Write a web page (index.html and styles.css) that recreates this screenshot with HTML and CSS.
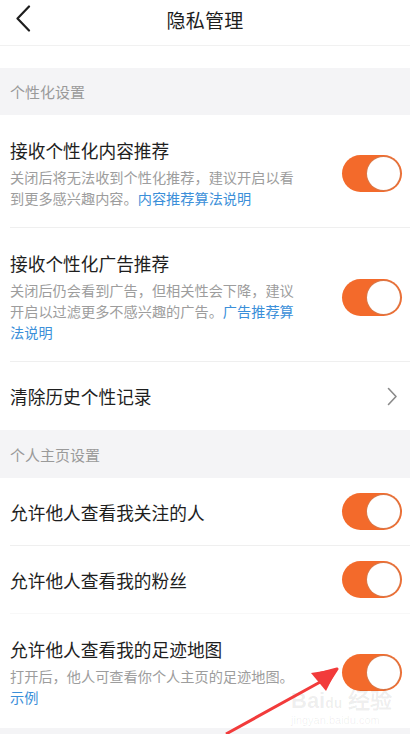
FILE: index.html
```html
<!DOCTYPE html>
<html lang="zh-CN">
<head>
    <meta charset="UTF-8">
    <meta name="viewport" content="width=device-width, initial-scale=1.0">
    <title>隐私管理</title>
    <link rel="stylesheet" href="styles.css">
</head>
<body>
    <div class="page">
        <div class="topbar">
            <svg class="back" width="16" height="27" viewBox="0 0 16 27">
                <path d="M14 1.5 L2.5 13.5 L14 25.5" fill="none" stroke="#1e1e1e" stroke-width="2.2" stroke-linecap="round" stroke-linejoin="round"/>
            </svg>
            <div class="topbar-title">隐私管理</div>
        </div>
        <div class="spacer"></div>

        <div class="section-title">个性化设置</div>
        <div class="group">
            <div class="row tall">
                <div class="text">
                    <div class="title">接收个性化内容推荐</div>
                    <div class="desc"><span>关闭后将无法收到个性化推荐，建议开启以看</span><span>到更多感兴趣内容。</span><span class="link">内容推荐算法说明</span></div>
                </div>
                <div class="switch"><span class="knob"></span></div>
            </div>
            <div class="row tall">
                <div class="text">
                    <div class="title">接收个性化广告推荐</div>
                    <div class="desc"><span>关闭后仍会看到广告，但相关性会下降，建议</span><span>开启以过滤更多不感兴趣的广告。</span><span class="link">广告推荐算</span><span class="link">法说明</span></div>
                </div>
                <div class="switch"><span class="knob"></span></div>
            </div>
            <div class="row plain last">
                <div class="title">清除历史个性记录</div>
                <svg class="arrow-right" width="11" height="19" viewBox="0 0 11 19">
                    <path d="M1.5 1.5 L9 9.5 L1.5 17.5" fill="none" stroke="#8a8a8a" stroke-width="1.6" stroke-linecap="round" stroke-linejoin="round"/>
                </svg>
            </div>
        </div>

        <div class="section-title second">个人主页设置</div>
        <div class="group">
            <div class="row plain">
                <div class="title">允许他人查看我关注的人</div>
                <div class="switch"><span class="knob"></span></div>
            </div>
            <div class="row plain faint">
                <div class="title">允许他人查看我的粉丝</div>
                <div class="switch"><span class="knob"></span></div>
            </div>
            <div class="row tall last bottom">
                <div class="text">
                    <div class="title">允许他人查看我的足迹地图</div>
                    <div class="desc"><span>打开后，他人可查看你个人主页的足迹地图。</span><span class="link">示例</span></div>
                </div>
                <div class="switch"><span class="knob"></span></div>
            </div>
        </div>

        <div class="watermark">
            <div class="wm-big">Bai<span class="wm-du">du</span> 经验</div>
            <div class="wm-small">jingyan.baidu.com</div>
        </div>

        <svg class="pointer" width="410" height="734" viewBox="0 0 410 734">
            <path d="M226 734 L322 681 L318 674 L337 669 L326 686 L322 681" fill="#f23b3b" stroke="#f23b3b" stroke-width="3" stroke-linejoin="round"/>
            <path d="M337 669 L311 673 L326 691 Z" fill="#f23b3b"/>
        </svg>
    </div>
</body>
</html>
```

FILE: styles.css
```css
body{
    margin: 0;
    background-color: #f4f4f6;
    font-family: "Noto Sans CJK SC", "Noto Sans", sans-serif;
}

.page{
    position: relative;
    width: 410px;
    height: 734px;
    overflow: hidden;
    background-color: #f4f4f6;
}

.topbar{
    position: relative;
    height: 38px;
    padding-bottom: 7px;
    display: flex;
    align-items: center;
    justify-content: center;
    background-color: #fff;
    border-bottom: 1px solid #f1f1f1;
}

.back{
    position: absolute;
    left: 15px;
    top: 5px;
}

.topbar-title{
    font-size: 19px;
    color: #1e1e1e;
    letter-spacing: 0.3px;
}

.spacer{
    height: 22px;
    background-color: #fff;
}

.section-title{
    height: 47px;
    display: flex;
    align-items: center;
    padding-left: 10px;
    font-size: 15px;
    color: #9a9a9a;
}

.section-title.second{
    height: 48px;
}

.group{
    background-color: #fff;
}

.row{
    display: flex;
    align-items: center;
    justify-content: space-between;
    margin-left: 10px;
    padding-right: 8px;
    border-bottom: 1px solid #efefef;
}

.row.plain{
    height: 67px;
}

.row.faint{
    border-bottom-color: #f8f8f8;
}

.row.last{
    border-bottom: none;
}

.row.plain.last{
    height: 68px;
}

.row.tall{
    padding-top: 23px;
    padding-bottom: 18px;
}

.row.bottom{
    padding-bottom: 20px;
}

.text{
    width: 288px;
}

.title{
    font-size: 17.7px;
    line-height: 24px;
    color: #1e1e1e;
}

.desc{
    margin-top: 5px;
    font-size: 14.2px;
    line-height: 21px;
    color: #9d9d9d;
}

.link{
    color: #3b8fd9;
}

.switch{
    position: relative;
    width: 60px;
    height: 37px;
    border-radius: 19px;
    background-color: #f36a2b;
    flex-shrink: 0;
}

.knob{
    position: absolute;
    right: 2px;
    top: 2px;
    width: 33px;
    height: 33px;
    border-radius: 50%;
    background-color: #fff;
    box-shadow: 0 0 0 1px #d9794a;
}

.arrow-right{
    margin-right: 4px;
}

.watermark{
    position: absolute;
    left: 291px;
    top: 690px;
    color: rgba(0, 0, 0, 0.07);
    font-family: "Liberation Sans", sans-serif;
}

.wm-big{
    font-size: 22px;
    font-weight: bold;
    line-height: 22px;
}

.wm-du{
    font-size: 14px;
}

.wm-small{
    font-size: 11px;
    line-height: 13px;
}

.pointer{
    position: absolute;
    left: 0;
    top: 0;
}
```
